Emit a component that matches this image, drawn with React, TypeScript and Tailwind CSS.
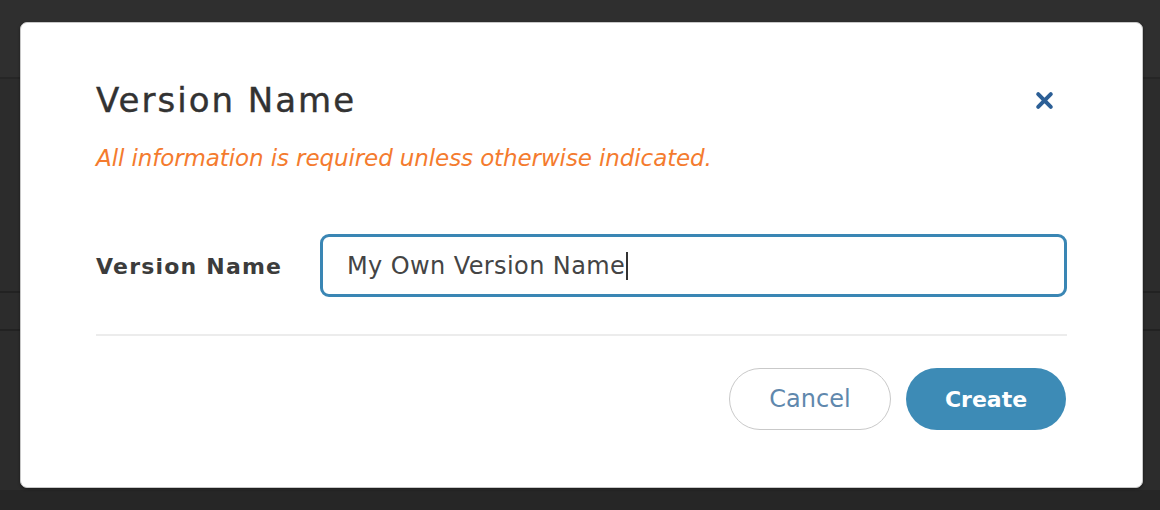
import React from "react";

export default function App() {
  const font = { fontFamily: '"DejaVu Sans", "Noto Sans", sans-serif' };
  return (
    <div className="relative w-[1160px] h-[510px] overflow-hidden bg-[#2c2c2c]" style={font}>
      {/* background page under overlay */}
      <div className="flex flex-col w-full h-full">
        <div className="h-[77px] bg-[#2f2f2f]" />
        <div className="h-[2px] bg-[#262626]" />
        <div className="h-[212px] bg-[#2c2c2c]" />
        <div className="h-[2px] bg-[#222222]" />
        <div className="h-[36px] bg-[#2c2c2c]" />
        <div className="h-[2px] bg-[#222222]" />
        <div className="flex-1 bg-[#2c2c2c]" />
        <div className="h-[20px] bg-[#262626]" />
      </div>

      {/* modal */}
      <div className="absolute left-[20px] top-[22px] w-[1123px] h-[466px] bg-white rounded-[7px] border border-[#c8c8c8] shadow-[0_1px_3px_rgba(0,0,0,0.4)]">
        <div className="flex flex-col pl-[75px] pr-[75px] pt-[58px]">
          <div className="flex items-start justify-between">
            <h2 className="text-[34px] leading-[38px] font-normal text-[#323232] tracking-[2px] [-webkit-text-stroke:0.4px_#323232]">Version Name</h2>
            <button className="mt-[10px] mr-[13px] text-[#2c5f96]">
              <svg width="19" height="19" viewBox="0 0 19 19">
                <path d="M3.2 3.2 L15.8 15.8 M15.8 3.2 L3.2 15.8" stroke="currentColor" strokeWidth="4" strokeLinecap="round" />
              </svg>
            </button>
          </div>
          <p className="mt-[27px] text-[23px] leading-[24px] italic text-[#f47b2e] tracking-[-0.1px]">
            All information is required unless otherwise indicated.
          </p>

          <div className="mt-[64px] flex items-center">
            <label className="w-[224px] text-[22px] font-semibold text-[#3c3c3c] tracking-[1.2px] pt-[2px]">Version Name</label>
            <div className="flex-1 h-[63px] rounded-[9px] border-[3px] border-[#3a86b4] flex items-center pl-[24px]">
              <span className="text-[24px] text-[#444444] tracking-[0.4px]">My Own Version Name</span>
              <span className="ml-[1px] w-[1.5px] h-[28px] bg-[#333333]" />
            </div>
          </div>

          <div className="mt-[37px] h-[2px] bg-[#ececec]" />

          <div className="mt-[32px] flex justify-end gap-[15px]">
            <button className="w-[162px] h-[62px] rounded-full border border-[#c9c9c9] text-[24px] text-[#5f88ad] tracking-[0px]">
              Cancel
            </button>
            <button className="w-[160px] h-[62px] rounded-full bg-[#3d8bb6] text-[22px] font-semibold text-white tracking-[0px] mr-[1px]">
              Create
            </button>
          </div>
        </div>
      </div>
    </div>
  );
}
